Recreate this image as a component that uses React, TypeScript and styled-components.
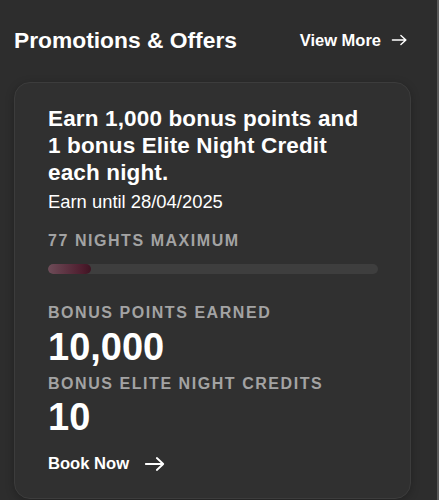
import React from "react";
import styled, { createGlobalStyle } from "styled-components";

const Global = createGlobalStyle`
  html, body { margin: 0; padding: 0; background: #2d2d2d; }
  body { font-family: "Liberation Sans", Arial, sans-serif; color: #fff; }
  * { box-sizing: border-box; }
`;

const Page = styled.div`
  width: 439px;
  height: 500px;
  overflow: hidden;
  background: #2d2d2d;
  border-right: 2px solid #5a5a5a;
  padding: 25px 0 0 14px;
`;

const Inner = styled.div`
  width: 397px;
  display: flex;
  flex-direction: column;
`;

const Header = styled.div`
  display: flex;
  align-items: center;
  justify-content: space-between;
  padding-right: 3px;
  height: 30px;
`;

const Title = styled.h2`
  margin: 0;
  font-size: 22.8px;
  font-weight: 700;
  color: #fff;
`;

const ViewMore = styled.a`
  display: flex;
  align-items: center;
  gap: 10px;
  font-size: 16.5px;
  font-weight: 700;
  color: #fff;
  text-decoration: none;
`;

const Card = styled.div`
  margin-top: 27px;
  background: #303030;
  border: 1px solid #3c3c3c;
  border-radius: 16px;
  padding: 22px 33px 24px;
  display: flex;
  flex-direction: column;
  box-shadow: 0 2px 8px rgba(0, 0, 0, 0.25);
`;

const Headline = styled.div`
  font-size: 22.5px;
  font-weight: 700;
  line-height: 27px;
  letter-spacing: 0.15px;
`;

const Until = styled.div`
  font-size: 18.4px;
  margin-top: 5px;
  line-height: 22px;
`;

const Label = styled.div<{ $mt: number }>`
  margin-top: ${(p) => p.$mt}px;
  font-size: 16px;
  font-weight: 700;
  letter-spacing: 1.55px;
  color: #a3a3a3;
  line-height: 18px;
`;

const Track = styled.div`
  margin-top: 14px;
  width: 330px;
  height: 10px;
  border-radius: 5px;
  background: #3e3e3e;
  overflow: hidden;
`;

const Fill = styled.div`
  height: 100%;
  border-radius: 5px;
  background: linear-gradient(90deg, #6e4c58 0%, #4e1d2e 80%, #3e1422 100%);
`;

const BigNum = styled.div<{ $mt: number }>`
  margin-top: ${(p) => p.$mt}px;
  font-size: 38px;
  font-weight: 700;
  line-height: 40px;
`;

const Book = styled.a`
  margin-top: 17px;
  display: flex;
  align-items: center;
  gap: 15px;
  font-size: 16.6px;
  line-height: 20px;
  font-weight: 700;
  color: #fff;
  text-decoration: none;
`;

const Arrow = ({ w, h }: { w: number; h: number }) => (
  <svg
    width={w}
    height={h}
    viewBox="0 0 24 16"
    fill="none"
    stroke="#fff"
    strokeWidth="2"
    strokeLinecap="round"
    strokeLinejoin="round"
  >
    <path d="M2 8h19M14 1.5 21 8l-7 6.5" />
  </svg>
);

export default function App() {
  const nights = 10;
  const max = 77;
  return (
    <>
      <Global />
      <Page>
        <Inner>
          <Header>
            <Title>Promotions &amp; Offers</Title>
            <ViewMore href="#">
              View More <Arrow w={17} h={14} />
            </ViewMore>
          </Header>
          <Card>
            <Headline>
              Earn 1,000 bonus points and
              <br />1 bonus Elite Night Credit
              <br />
              each night.
            </Headline>
            <Until>Earn until 28/04/2025</Until>
            <Label $mt={19}>77 NIGHTS MAXIMUM</Label>
            <Track>
              <Fill style={{ width: `${(nights / max) * 100}%` }} />
            </Track>
            <Label $mt={30}>BONUS POINTS EARNED</Label>
            <BigNum $mt={5}>10,000</BigNum>
            <Label $mt={8}>BONUS ELITE NIGHT CREDITS</Label>
            <BigNum $mt={4}>10</BigNum>
            <Book href="#">
              Book Now <Arrow w={22} h={16} />
            </Book>
          </Card>
        </Inner>
      </Page>
    </>
  );
}
